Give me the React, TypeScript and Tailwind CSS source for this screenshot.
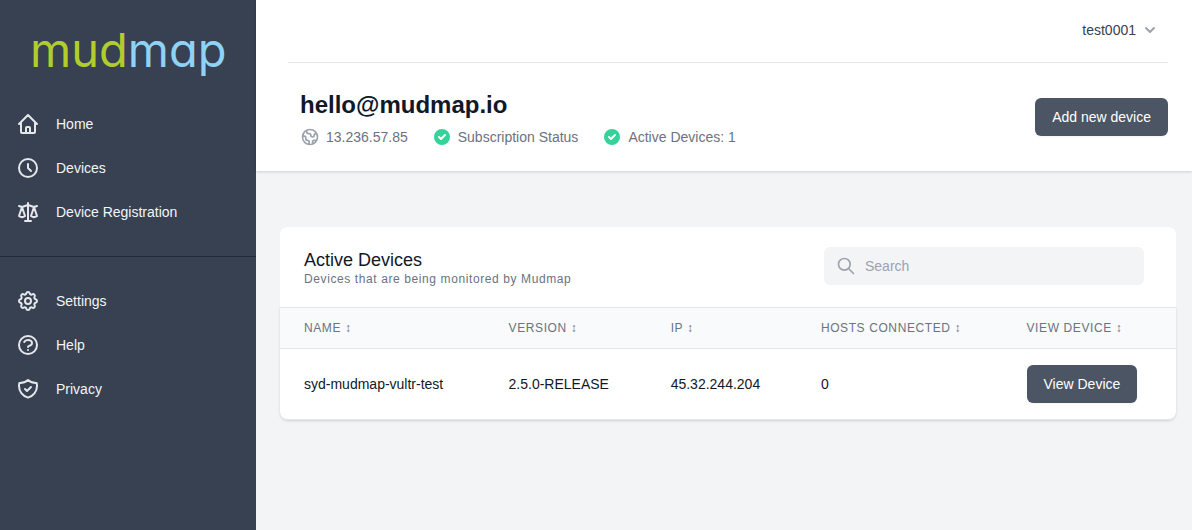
import type { ReactNode } from 'react';
import type { IconType } from 'react-icons';
import {
  HiCheckCircle,
  HiChevronDown,
  HiOutlineClock,
  HiOutlineCog,
  HiOutlineGlobe,
  HiOutlineHome,
  HiOutlineQuestionMarkCircle,
  HiOutlineScale,
  HiOutlineSearch,
  HiOutlineShieldCheck,
} from 'react-icons/hi';

type NavItem = { label: string; icon: IconType };

const primaryNav: NavItem[] = [
  { label: 'Home', icon: HiOutlineHome },
  { label: 'Devices', icon: HiOutlineClock },
  { label: 'Device Registration', icon: HiOutlineScale },
];

const secondaryNav: NavItem[] = [
  { label: 'Settings', icon: HiOutlineCog },
  { label: 'Help', icon: HiOutlineQuestionMarkCircle },
  { label: 'Privacy', icon: HiOutlineShieldCheck },
];

const columns = ['Name', 'Version', 'IP', 'Hosts Connected', 'View Device'];

const devices = [
  { name: 'syd-mudmap-vultr-test', version: '2.5.0-RELEASE', ip: '45.32.244.204', hosts: 0 },
];

function NavList({ items }: { items: NavItem[] }) {
  return (
    <ul className="flex flex-col gap-1 px-2">
      {items.map(({ label, icon: Icon }) => (
        <li key={label}>
          <a href="#" className="flex h-10 items-center gap-4 rounded-md px-2 text-[#f3f4f6]">
            <Icon className="size-6 text-[#e5e7eb]" aria-hidden="true" />
            {label}
          </a>
        </li>
      ))}
    </ul>
  );
}

function Button({ children }: { children: ReactNode }) {
  return (
    <button
      type="button"
      className="h-[38px] rounded-md bg-[#4b5563] px-[17px] whitespace-nowrap text-white shadow-xs"
    >
      {children}
    </button>
  );
}

export default function App() {
  return (
    <div className="flex min-h-screen bg-[#f3f4f6] font-['Liberation_Sans',Arial,sans-serif] text-sm leading-5 text-[#111827]">
      <aside className="w-64 shrink-0 bg-[#374151]">
        <a
          href="#"
          aria-label="mudmap"
          className="flex h-[104px] items-center px-[30px] pb-1 font-['Inter',sans-serif] text-[47px] font-normal [font-feature-settings:'cv11']"
        >
          <span className="text-[#b0cc2e]">mud</span>
          <span className="text-[#8ed2f5]">map</span>
        </a>
        <nav aria-label="Main">
          <NavList items={primaryNav} />
          <hr className="mt-6 mb-6 border-[#1f2937]" />
          <NavList items={secondaryNav} />
        </nav>
      </aside>

      <div className="min-w-0 flex-1">
        <header className="bg-white shadow-[0_1px_3px_rgba(0,0,0,0.1),0_1px_2px_rgba(0,0,0,0.06)]">
          <div className="mx-8 mr-6">
            <div className="flex h-[63px] items-center justify-end border-b border-[#e5e7eb] pr-2 pb-0.5">
              <button type="button" className="flex items-center gap-1 text-[#374151]">
                test0001
                <HiChevronDown className="size-5 text-[#9ca3af]" aria-hidden="true" />
              </button>
            </div>
            <div className="flex h-[108px] items-center justify-between pl-3">
              <div>
                <h1 className="text-2xl leading-9 font-bold">hello@mudmap.io</h1>
                <ul className="mt-1 flex gap-6 text-[#6b7280]">
                  <li className="flex items-center gap-1.5">
                    <HiOutlineGlobe className="size-5 text-[#9ca3af]" aria-hidden="true" />
                    13.236.57.85
                  </li>
                  <li className="flex items-center gap-1.5">
                    <HiCheckCircle className="size-5 text-[#34d399]" aria-hidden="true" />
                    Subscription Status
                  </li>
                  <li className="flex items-center gap-1.5">
                    <HiCheckCircle className="size-5 text-[#34d399]" aria-hidden="true" />
                    Active Devices: 1
                  </li>
                </ul>
              </div>
              <Button>Add new device</Button>
            </div>
          </div>
        </header>

        <main className="px-6 pt-14 pr-4">
          <section className="rounded-lg bg-white">
            <div className="flex h-20 items-center justify-between pr-8 pb-0.5 pl-6">
              <div className="pt-1.5">
                <h2 className="text-lg leading-5">Active Devices</h2>
                <p className="text-xs leading-[18px] tracking-wider text-[#6b7280]">
                  Devices that are being monitored by Mudmap
                </p>
              </div>
              <label className="flex h-[38px] w-80 items-center gap-[9px] rounded-md bg-[#f3f4f6] px-3 text-[#9ca3af]">
                <HiOutlineSearch className="size-5 shrink-0" aria-hidden="true" />
                <input
                  type="search"
                  aria-label="Search"
                  placeholder="Search"
                  className="w-full bg-transparent text-[#111827] outline-none placeholder:text-[#9ca3af]"
                />
              </label>
            </div>
            <div className="overflow-hidden rounded-b-lg border-b border-[#e5e7eb] shadow-[0_1px_3px_rgba(0,0,0,0.1),0_1px_2px_rgba(0,0,0,0.06)]">
              <table className="w-full text-left">
                <thead>
                  <tr className="h-[41px] border-y border-[#e5e7eb] bg-[#f9fafb] text-xs tracking-wider text-[#6b7280] uppercase">
                    {columns.map((label) => (
                      <th key={label} scope="col" className="px-6 font-normal whitespace-nowrap">
                        {label} ↕
                      </th>
                    ))}
                  </tr>
                </thead>
                <tbody>
                  {devices.map((device) => (
                    <tr key={device.name} className="h-[70px] whitespace-nowrap">
                      <td className="px-6">{device.name}</td>
                      <td className="px-6">{device.version}</td>
                      <td className="px-6">{device.ip}</td>
                      <td className="px-6">{device.hosts}</td>
                      <td className="px-6">
                        <Button>View Device</Button>
                      </td>
                    </tr>
                  ))}
                </tbody>
              </table>
            </div>
          </section>
        </main>
      </div>
    </div>
  );
}
